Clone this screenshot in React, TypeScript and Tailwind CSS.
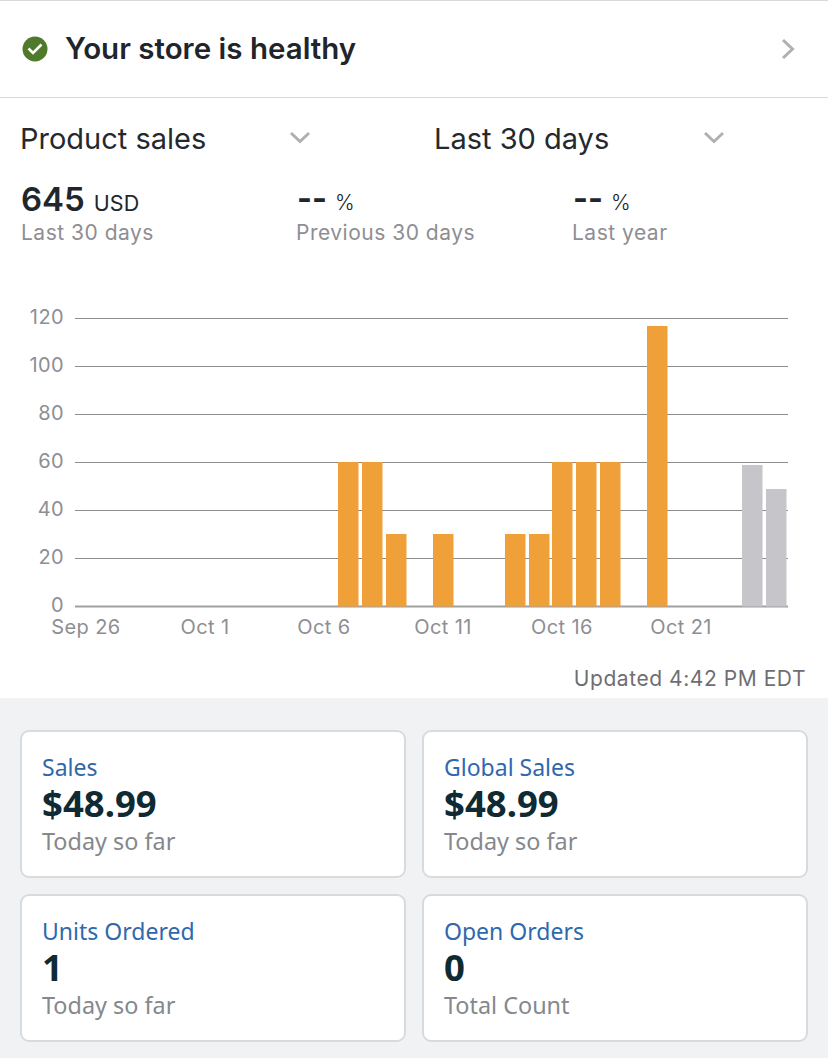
import React from 'react';

const inter = { fontFamily: 'Inter, sans-serif' };

const gridLines = [
  { label: '120', y: 318 },
  { label: '100', y: 366 },
  { label: '80', y: 414 },
  { label: '60', y: 462 },
  { label: '40', y: 510 },
  { label: '20', y: 558 },
  { label: '0', y: 606 },
];

const bars = [
  { x: 338, top: 462, fill: '#f0a038' },
  { x: 362, top: 462, fill: '#f0a038' },
  { x: 386, top: 534, fill: '#f0a038' },
  { x: 433, top: 534, fill: '#f0a038' },
  { x: 505, top: 534, fill: '#f0a038' },
  { x: 529, top: 534, fill: '#f0a038' },
  { x: 552, top: 462, fill: '#f0a038' },
  { x: 576, top: 462, fill: '#f0a038' },
  { x: 600, top: 462, fill: '#f0a038' },
  { x: 647, top: 326, fill: '#f0a038' },
  { x: 742, top: 465, fill: '#c6c6ca' },
  { x: 766, top: 489, fill: '#c6c6ca' },
];

const xLabels = [
  { label: 'Sep 26', x: 86 },
  { label: 'Oct 1', x: 205 },
  { label: 'Oct 6', x: 324 },
  { label: 'Oct 11', x: 443 },
  { label: 'Oct 16', x: 562 },
  { label: 'Oct 21', x: 681 },
];

const Chevron = () => (
  <svg className="-mt-[2px]" width="22" height="14" viewBox="0 0 22 14" fill="none">
    <path d="M2 2 L11 10.5 L20 2" stroke="#b0b0b0" strokeWidth="3" />
  </svg>
);

const Stat = ({ value, unit, label, big }: { value: string; unit: string; label: string; big?: boolean }) => (
  <div className={big ? 'w-[275px] shrink-0' : 'w-[276px] shrink-0'}>
    <div className="flex items-baseline h-[36px]">
      {big ? (
        <span className="text-[33px] leading-[36px] font-semibold text-[#20262c]">{value}</span>
      ) : (
        <span className="ml-[1px] text-[32px] leading-[36px] font-bold text-[#20262c]">{value}</span>
      )}
      <span className={big ? 'ml-[9px] text-[21.5px] text-[#20262c]' : 'ml-[8px] text-[21px] font-light text-[#20262c]'}>{unit}</span>
    </div>
    <div className="mt-[3px] text-[21px] leading-[26px] tracking-[0.5px] text-[#8e8e93]">{label}</div>
  </div>
);

const Card = ({ title, value, sub }: { title: string; value: string; sub: string }) => (
  <div className="h-[148px] rounded-[9px] border-2 border-[#d8dbde] bg-white pl-[20px] pt-[21px]">
    <div className="text-[23px] leading-[28px] text-[#2f68ad]">{title}</div>
    <div className="text-[36.5px] leading-[44px] font-bold text-[#0f2a33]">{value}</div>
    <div className="text-[23.4px] leading-[32px] text-[#85888c]">{sub}</div>
  </div>
);

export default function App() {
  return (
    <div className="w-[828px] h-[1058px] overflow-hidden bg-white" style={inter}>
      {/* Health row */}
      <div className="h-[98px] border-y border-[#d9d9d9] flex items-center pl-[22px] pr-[32px]">
        <svg width="26" height="26" viewBox="0 0 26 26">
          <circle cx="13" cy="13" r="12.5" fill="#4f7a2b" />
          <path d="M6.5 12.5 L11 17 L19.5 8.5" fill="none" stroke="#fff" strokeWidth="2.6" />
        </svg>
        <span className="ml-[17px] -mt-[2px] text-[29.5px] font-semibold text-[#1f252b]">Your store is healthy</span>
        <svg className="ml-auto" width="16" height="24" viewBox="0 0 16 24" fill="none">
          <path d="M3 3 L12.5 12 L3 21" stroke="#b0b0b0" strokeWidth="3" />
        </svg>
      </div>

      {/* Dropdowns */}
      <div className="flex mt-[19px] pl-[20px] h-[44px] items-center">
        <div className="w-[414px] flex items-center">
          <span className="text-[29px] text-[#24292e] w-[269px]">Product sales</span>
          <Chevron />
        </div>
        <div className="flex items-center">
          <span className="text-[29px] text-[#24292e] w-[269px]">Last 30 days</span>
          <Chevron />
        </div>
      </div>

      {/* Stats */}
      <div className="flex mt-[20px] pl-[21px]">
        <Stat value="645" unit="USD" label="Last 30 days" big />
        <Stat value="--" unit="%" label="Previous 30 days" />
        <Stat value="--" unit="%" label="Last year" />
      </div>

      {/* Chart */}
      <svg className="block mt-[34px]" width="828" height="418" viewBox="0 280 828 418">
        {gridLines.map((g) => (
          <g key={g.label}>
            <line x1="75" x2="788" y1={g.y + 0.5} y2={g.y + 0.5} stroke={g.label === '0' ? '#a0a0a0' : '#8c8c8c'} strokeWidth={g.label === '0' ? 2 : 1} />
            <text x="64" y={g.y + 6} textAnchor="end" fontSize="20" fill="#8e8e93" letterSpacing="0.4">
              {g.label}
            </text>
          </g>
        ))}
        {bars.map((b) => (
          <rect key={b.x} x={b.x} y={b.top} width="20.5" height={606.5 - b.top} fill={b.fill} />
        ))}
        {xLabels.map((l) => (
          <text key={l.label} x={l.x} y="634" textAnchor="middle" fontSize="20" fill="#8e8e93" letterSpacing="0.4">
            {l.label}
          </text>
        ))}
        <text x="806" y="686" textAnchor="end" fontSize="21" fill="#6e6e73" letterSpacing="0.55">
          Updated 4:42 PM EDT
        </text>
      </svg>

      {/* Cards */}
      <div className="h-[360px] bg-[#f0f2f4] px-[20px] pt-[32px]" style={{ fontFamily: '"Noto Sans", sans-serif' }}>
        <div className="grid grid-cols-2 gap-x-[16px] gap-y-[16px]">
          <Card title="Sales" value="$48.99" sub="Today so far" />
          <Card title="Global Sales" value="$48.99" sub="Today so far" />
          <Card title="Units Ordered" value="1" sub="Today so far" />
          <Card title="Open Orders" value="0" sub="Total Count" />
        </div>
      </div>
    </div>
  );
}
